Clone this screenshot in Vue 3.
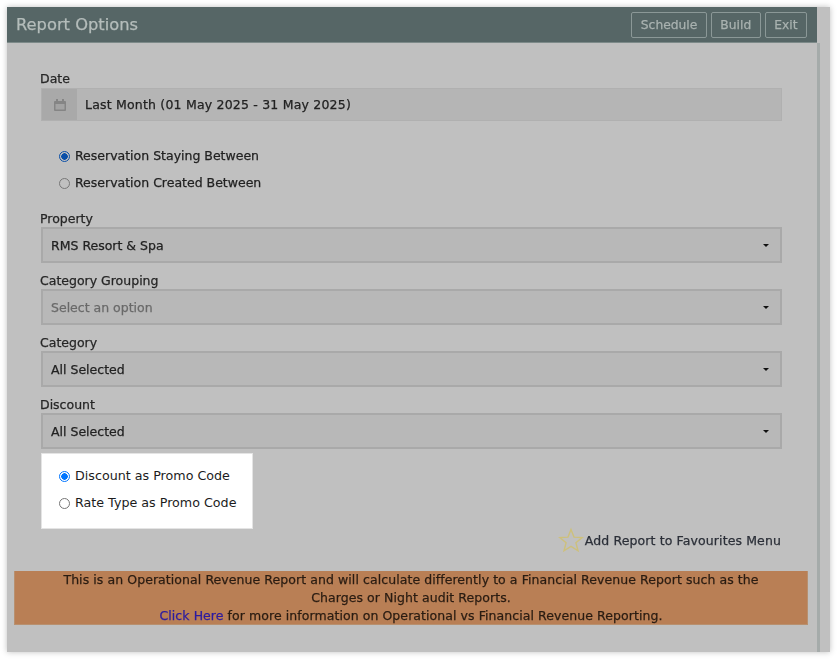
<template>
  <div class="page">
    <div class="panel">
      <div class="main">
        <header class="topbar">
          <h1>Report Options</h1>
          <div class="actions">
            <button v-for="action in actions" :key="action" class="top-btn">{{ action }}</button>
          </div>
        </header>

        <div class="body">
          <label class="field-label">Date</label>
          <div class="date-input">
            <span class="date-icon">
              <svg width="14" height="14" viewBox="0 0 14 14">
                <path d="M2 3h10a1 1 0 0 1 1 1v8a1 1 0 0 1-1 1H2a1 1 0 0 1-1-1V4a1 1 0 0 1 1-1z" fill="#858585" />
                <rect x="3" y="1" width="2" height="3" fill="#858585" />
                <rect x="9" y="1" width="2" height="3" fill="#858585" />
                <rect x="2.5" y="6" width="9" height="5.5" fill="#a3a3a3" />
              </svg>
            </span>
            <span class="date-text">Last Month (01 May 2025 - 31 May 2025)</span>
          </div>

          <div class="radios date-radios">
            <div class="radio-row">
              <span class="radio checked"></span>Reservation Staying Between
            </div>
            <div class="radio-row">
              <span class="radio"></span>Reservation Created Between
            </div>
          </div>

          <template v-for="field in fields" :key="field.label">
            <label class="field-label">{{ field.label }}</label>
            <div class="select" :class="{ placeholder: field.placeholder }">
              <span>{{ field.value }}</span>
              <span class="caret"></span>
            </div>
          </template>

          <div class="favourites">
            <svg width="26" height="26" viewBox="0 0 26 26">
              <path d="M13 2.5l3 7.6 8.2.5-6.3 5.2 2.1 8-7-4.4-7 4.4 2.1-8-6.3-5.2 8.2-.5z" fill="none" stroke="#cdc07c" stroke-width="1.4" />
            </svg>
            <span>Add Report to Favourites Menu</span>
          </div>
        </div>

        <div class="notice">
          This is an Operational Revenue Report and will calculate differently to a Financial Revenue Report such as the<br />
          Charges or Night audit Reports.<br />
          <a href="#" class="notice-link">Click Here</a> for more information on Operational vs Financial Revenue Reporting.
        </div>
      </div>
      <div class="scroll-strip"></div>
    </div>

    <div class="highlight">
      <div class="radio-row">
        <span class="radio checked bright"></span>Discount as Promo Code
      </div>
      <div class="radio-row">
        <span class="radio"></span>Rate Type as Promo Code
      </div>
    </div>
  </div>
</template>

<script setup>
const actions = ['Schedule', 'Build', 'Exit'];

const fields = [
  { label: 'Property', value: 'RMS Resort & Spa' },
  { label: 'Category Grouping', value: 'Select an option', placeholder: true },
  { label: 'Category', value: 'All Selected' },
  { label: 'Discount', value: 'All Selected' },
];
</script>

<style scoped>
.page {
  position: relative;
  width: 838px;
  height: 659px;
  padding: 7px 8px 7px 7px;
  box-sizing: border-box;
  background: #fff;
  font-family: "DejaVu Sans", Verdana, sans-serif;
  font-size: 12.5px;
  color: #222;
  overflow: hidden;
}

.panel {
  display: flex;
  height: 645px;
  background: #c0c0c0;
  box-shadow: 0 0 6px rgba(0, 0, 0, 0.25);
  filter: blur(0.6px);
  -webkit-text-stroke: 0.25px currentColor;
}

.main {
  width: 810px;
  display: flex;
  flex-direction: column;
}

.scroll-strip {
  width: 3px;
  margin-top: 36px;
  background: #a5abaa;
}

.topbar {
  height: 35px;
  display: flex;
  align-items: center;
  justify-content: space-between;
  padding: 0 10px 0 9px;
  background: #566666;
  border-bottom: 1px solid #7d8a89;
}

.topbar h1 {
  margin: 0;
  font-size: 16.3px;
  font-weight: normal;
  color: #b5bdbb;
}

.actions {
  display: flex;
  gap: 4px;
}

.top-btn {
  height: 26px;
  padding: 0 8.5px;
  font-family: inherit;
  font-size: 12.3px;
  -webkit-text-stroke: 0.25px currentColor;
  color: #a9b2b0;
  background: transparent;
  border: 1px solid #8b9897;
  border-radius: 2px;
}

.body {
  height: 528px;
  padding: 28px 0 0 34px;
  box-sizing: border-box;
}

.field-label {
  display: block;
  margin-left: -1px;
  line-height: 16px;
  color: #262626;
}

.date-input {
  width: 741px;
  height: 33px;
  margin-top: 1px;
  display: flex;
  align-items: center;
  background: #b5b5b5;
  border: 1px solid #b0b0b0;
  box-sizing: border-box;
}

.date-icon {
  width: 35px;
  height: 31px;
  display: flex;
  align-items: center;
  justify-content: center;
  background: #a9a9a9;
}

.date-text {
  margin-left: 8px;
  letter-spacing: 0.2px;
}

.radios {
  display: flex;
  flex-direction: column;
}

.date-radios {
  margin: 27px 0 20px 18px;
  gap: 11px;
}

.radio-row {
  display: flex;
  align-items: center;
  gap: 5px;
  height: 16px;
  line-height: 16px;
}

.radio {
  width: 11px;
  height: 11px;
  border: 1px solid #777;
  border-radius: 50%;
  background: transparent;
  box-sizing: border-box;
  flex-shrink: 0;
}

.radio.checked {
  border-color: #0a4fa8;
  background: radial-gradient(circle, #0a4fa8 0 3px, #c0c0c0 3.5px);
}

.radio.bright {
  border-color: #0075ff;
  background: radial-gradient(circle, #0075ff 0 3px, #fff 3.5px);
}

.select {
  width: 741px;
  height: 36px;
  margin: 0 0 10px;
  padding: 0 11px 0 8px;
  display: flex;
  align-items: center;
  justify-content: space-between;
  background: #b8b8b8;
  border: 2px solid #a9a9a9;
  box-sizing: border-box;
}

.select.placeholder {
  color: #6a6a6a;
}

.caret {
  width: 0;
  height: 0;
  border-left: 3px solid transparent;
  border-right: 3px solid transparent;
  border-top: 3px solid #111;
}

.favourites {
  width: 740px;
  display: flex;
  align-items: center;
  justify-content: flex-end;
  gap: 1px;
  margin-top: 78px;
  letter-spacing: 0.12px;
  color: #2b2f38;
}

.notice {
  width: 794px;
  height: 54px;
  margin-left: 7px;
  background: #b97f55;
  border: 1px solid #b8906f;
  border-top: 0;
  box-sizing: border-box;
  text-align: center;
  line-height: 18px;
  letter-spacing: 0.07px;
  color: #2a1c12;
}

.notice-link {
  color: #2b1ba0;
  text-decoration: none;
}

/* sits over the dimmed form, not affected by the overlay */
.highlight {
  position: absolute;
  left: 42px;
  top: 454px;
  width: 210px;
  height: 74px;
  padding: 14px 0 0 17px;
  box-sizing: border-box;
  background: #fff;
  box-shadow: 0 0 0 1px #e4e4e4;
  display: flex;
  flex-direction: column;
  gap: 11px;
  font-size: 12.7px;
  color: #1c1c1c;
}

.highlight .radio {
  border-color: #767676;
}

.highlight .radio.bright {
  border-color: #0075ff;
}
</style>

<style>
html,
body {
  margin: 0;
  background: #fff;
}
</style>
